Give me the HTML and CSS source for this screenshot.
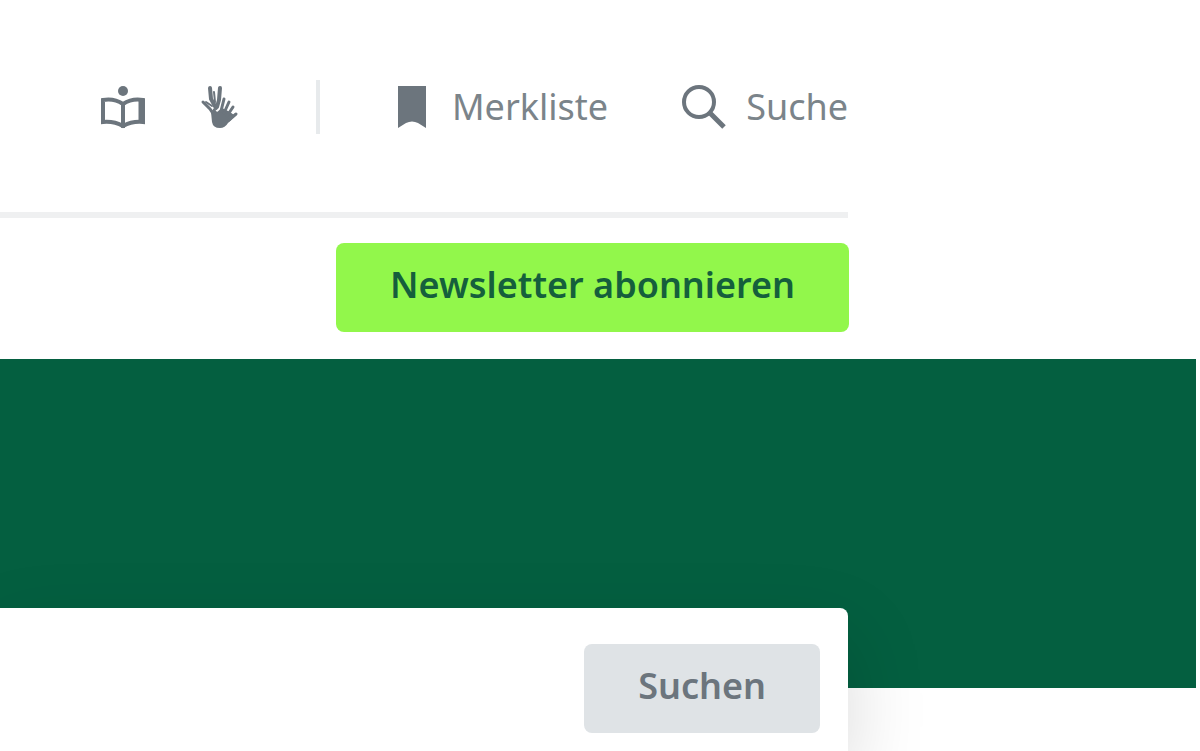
FILE: index.html
```
<!DOCTYPE html>
<html lang="de">
<head>
<meta charset="utf-8">
<title>Suche</title>
<link rel="stylesheet" href="styles.css">
</head>
<body>
<header class="header">
  <nav class="meta" aria-label="Service">
    <a class="meta-link book-link" href="#" aria-label="Leichte Sprache">
      <svg width="46" height="46" viewBox="0 0 46 46" fill="none" stroke="currentColor" stroke-width="4">
        <circle cx="23" cy="7" r="5" fill="currentColor" stroke="none"/>
        <path d="M3 16Q14 14 23 20Q32 14 43 16V38Q32 37 23 42Q14 37 3 38ZM23 20V44"/>
        <path d="M41 16V38" stroke-width="5"/>
      </svg>
    </a>
    <a class="meta-link hand-link" href="#" aria-label="Gebärdensprache">
      <svg width="40" height="46" viewBox="0 0 40 46" fill="none" stroke="currentColor" stroke-linecap="round">
        <path d="M11 28L14 24L17 28L22 24L30 28L34 31Q33 35 28 39Q25 44 20 44Q13 44 12 38Z" fill="currentColor" stroke="none"/>
        <path d="M10 4L11 15L16 24M20 4L19 16L17 23" stroke-width="4"/>
        <path d="M3 18L10 25L14 31M24 15L21 27M29 18L24 29M33 23L27 32M36 30L29 36" stroke-width="3"/>
        <path d="M14 8L15 18M6 18L12 22" stroke-width="2"/>
      </svg>
    </a>
    <span class="divider"></span>
    <a class="meta-link bookmark-link" href="#">
      <svg width="30" height="46" viewBox="0 0 30 46" fill="currentColor"><path d="M0 2H28V44L20 39Q14 36 8 39L0 44Z"/></svg>
      <span>Merkliste</span>
    </a>
    <a class="meta-link search-link" href="#">
      <svg width="46" height="46" viewBox="0 0 46 46" fill="none" stroke="currentColor" stroke-width="4">
        <circle cx="17" cy="18" r="15"/><path d="M27 28L42 43" stroke-width="5"/>
      </svg>
      <span>Suche</span>
    </a>
  </nav>
</header>
<div class="actions"><button class="button newsletter" type="button">Newsletter abonnieren</button></div>
<main class="main">
  <div class="hero"></div>
  <form class="search-card"><button class="button submit" type="button">Suchen</button></form>
</main>
</body>
</html>
```
FILE: styles.css
```
* { box-sizing: border-box; }
body {
  display: flex;
  flex-direction: column;
  min-height: 100vh;
  margin: 0;
  background: #fff;
  font-family: "Noto Sans", sans-serif;
  font-size: 36px;
  line-height: 48px;
}
.header {
  margin-right: 352px;
  padding: 80px 0 78px;
  border-bottom: 6px solid #eff0f1;
}
.meta {
  display: flex;
  align-items: center;
  justify-content: flex-end;
}
.meta-link {
  display: flex;
  align-items: center;
  color: #6c757d;
  text-decoration: none;
}
.meta-link svg { flex: none; display: block; }
.meta-link span { color: #7b848a; }
.hand-link { margin-left: 54px; }
.divider {
  width: 4px;
  height: 54px;
  margin-left: 76px;
  background: #e7eaec;
}
.bookmark-link { gap: 24px; margin-left: 78px; }
.search-link { gap: 18px; margin-left: 74px; }
.actions {
  display: flex;
  justify-content: flex-end;
  padding: 25px 351px 27px 0;
}
.button {
  border: 0;
  border-radius: 8px;
  font: inherit;
  font-weight: 600;
  padding: 18px 54px 23px;
}
.newsletter { background: #92f74b; color: #155f3c; }
.main {
  display: flex;
  flex: 1;
  flex-direction: column;
}
.hero {
  height: 329px;
  margin-right: 4px;
  background: #045f40;
}
.search-card {
  display: flex;
  flex: 1;
  justify-content: flex-end;
  margin: -80px 352px 0 0;
  padding: 36px 28px 16px;
  border-radius: 0 8px 0 0;
  background: #fff;
  box-shadow: 0 30px 80px rgba(0, 0, 0, .15);
}
.submit {
  align-self: flex-start;
  background: #dfe3e6;
  color: #6c757d;
}
```
